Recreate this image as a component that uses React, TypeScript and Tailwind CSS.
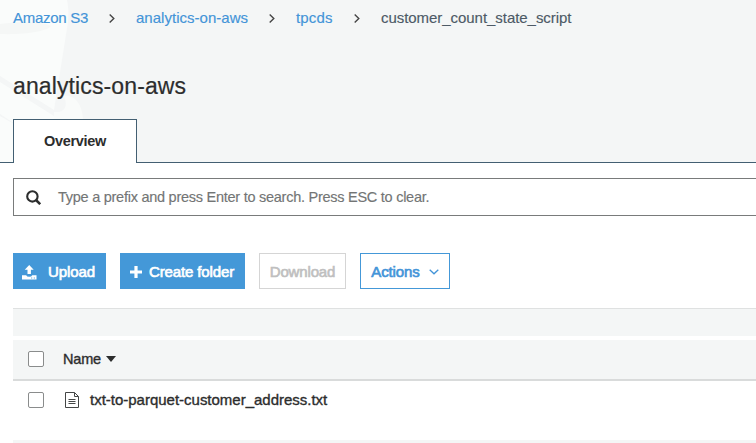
import type { ReactNode } from "react";

function Crumb({ children }: { children: ReactNode }) {
  return <span className="text-[#4394d8] [-webkit-text-stroke:0.15px]">{children}</span>;
}

function Separator({ className }: { className: string }) {
  return (
    <svg className={`shrink-0 ${className}`} width="6" height="9" viewBox="0 0 6 9" fill="none" stroke="#444" strokeWidth="1.4">
      <path d="M.7.5 4.8 4.5.7 8.5" />
    </svg>
  );
}

function Bucket() {
  return (
    <svg className="absolute left-0 top-0" width="90" height="162" viewBox="0 0 90 162" fill="none">
      <path d="M0 0H67Q69 8 68 22L54 110 0 76Z" fill="#fafcfb" />
      <path d="M0 24C20 21 45 22 51 26C48 31 25 35 0 34Z" fill="#f5f7f6" />
      <path d="M0 82 54 116V150L0 114Z" fill="#fafcfb" />
      <path d="M0 116 28 132V162H0Z" fill="#fafcfb" />
      <path d="M64 96C73 94 83 103 83 121H54V112C63 113 69 108 64 96Z" fill="#f9fbfa" />
    </svg>
  );
}

function Checkbox() {
  return <span className="block size-4 shrink-0 rounded-[2px] border border-[#8a8c8c] bg-white" />;
}

export default function App() {
  return (
    <div className="h-[443px] w-[756px] overflow-hidden bg-white font-['Liberation_Sans',Arial,sans-serif] text-[#2c2d2d]">
      <header className="relative flex h-[163px] flex-col border-b border-[#435f72] bg-[#f4f6f6]">
        <Bucket />
        <nav className="relative flex h-9 items-center whitespace-nowrap pl-[13px] text-[15px]">
          <span className="w-[75px] tracking-[-0.28px]"><Crumb>Amazon S3</Crumb></span>
          <Separator className="ml-[21px]" />
          <span className="ml-[21px] w-[112px] tracking-[0.02px]"><Crumb>analytics-on-aws</Crumb></span>
          <Separator className="ml-[21px]" />
          <span className="ml-[21px] w-[37px] tracking-[0.15px]"><Crumb>tpcds</Crumb></span>
          <Separator className="ml-[21px]" />
          <span className="ml-[21px] tracking-[-0.05px] text-[#4d5a66] [-webkit-text-stroke:0.15px]">customer_count_state_script</span>
        </nav>
        <h1 className="relative mt-[34px] pl-[13px] text-[23px] leading-8 tracking-[0.12px] [-webkit-text-stroke:0.2px]">analytics-on-aws</h1>
        <div className="relative mb-[-1px] ml-[13px] mt-auto flex h-11 w-[124px] shrink-0 items-center justify-center border border-b-0 border-[#435f72] bg-white text-[14.5px] font-bold tracking-[-0.32px]">
          Overview
        </div>
      </header>
      <main className="pl-[13px] pt-[15px]">
        <div className="flex h-[38px] items-center border border-r-0 border-[#797b7b] pl-[12px]">
          <svg width="15" height="15" viewBox="0 0 15 15" fill="none" stroke="#2c2d2d" strokeWidth="2.1">
            <circle cx="6.4" cy="6.4" r="5.2" />
            <path d="m10 10 4.2 4.2" strokeWidth="2.5" />
          </svg>
          <span className="ml-[17px] whitespace-nowrap pt-[2px] text-[14.5px] tracking-[-0.26px] text-[#737575] [-webkit-text-stroke:0.15px]">
            Type a prefix and press Enter to search. Press ESC to clear.
          </span>
        </div>
        <div className="mt-[37px] flex h-9 gap-[14px] whitespace-nowrap text-[15px] [-webkit-text-stroke:0.65px]">
          <button className="flex w-[93px] items-center bg-[#4498d8] pl-[9px] pt-[2px] tracking-[-0.1px] text-white">
            <svg width="15" height="15" viewBox="0 0 15 15" fill="white">
              <path d="M7.2 0 11.7 4.7H8.9V9H5.5V4.7H2.7ZM0 10.2h4.2q.5 1.5 3 1.5t3-1.5h4.3v4.3H0Zm9.2 2.3v1h1v-1Zm2.6 0v1h1v-1Z" fillRule="evenodd" />
            </svg>
            <span className="ml-[11px]">Upload</span>
          </button>
          <button className="flex w-[125px] items-center bg-[#4498d8] pl-[10px] pt-[2px] tracking-[-0.13px] text-white">
            <svg className="mb-px" width="12" height="12" viewBox="0 0 12 12" fill="white">
              <path d="M4.4 0h3.2v4.4H12v3.2H7.6V12H4.4V7.6H0V4.4h4.4Z" />
            </svg>
            <span className="ml-[7px]">Create folder</span>
          </button>
          <button className="w-[87px] border border-[#d5d5d5] pt-[2px] tracking-[-0.15px] text-[#bfbfbf]">Download</button>
          <button className="flex w-[90px] items-center border border-[#4498d8] pl-[10px] pt-[2px] tracking-[-0.1px] text-[#4394d8]">
            <span className="w-[49px]">Actions</span>
            <svg className="ml-[9px]" width="10" height="6" viewBox="0 0 10 6" fill="none" stroke="#4394d8" strokeWidth="1.3">
              <path d="m.7.7 4.3 4.1L9.3.7" />
            </svg>
          </button>
        </div>
        <div className="mt-[19px] h-7 border-t border-[#dfe1e1] bg-[#f4f6f6]" />
        <div className="mt-1 flex h-[41px] items-center border-b-2 border-[#d9dbdb] bg-[#f4f6f6] pb-px pl-[15px]">
          <Checkbox />
          <span className="ml-[19px] pt-[2px] text-[14.5px] tracking-[-0.2px] [-webkit-text-stroke:0.35px]">Name</span>
          <span className="ml-[5px] border-x-[5px] border-t-[6px] border-x-transparent border-t-[#2c2d2d]" />
        </div>
        <div className="flex h-[59px] items-start pl-[15px] pt-[11px]">
          <Checkbox />
          <svg className="ml-[21px]" width="14" height="16" viewBox="0 0 14 16" fill="none" stroke="#444646">
            <path d="M.5.5h9l4 4v11H.5Z" fill="white" />
            <path d="M9.5.5v4h4" />
            <path d="M3.5 7.5h7M3.5 9.5h7M3.5 11.5h7" />
          </svg>
          <span className="ml-[11px] text-[15px] leading-4 tracking-[-0.01px] [-webkit-text-stroke:0.35px]">txt-to-parquet-customer_address.txt</span>
        </div>
        <div className="h-[3px] bg-[#f4f6f6]" />
      </main>
    </div>
  );
}
